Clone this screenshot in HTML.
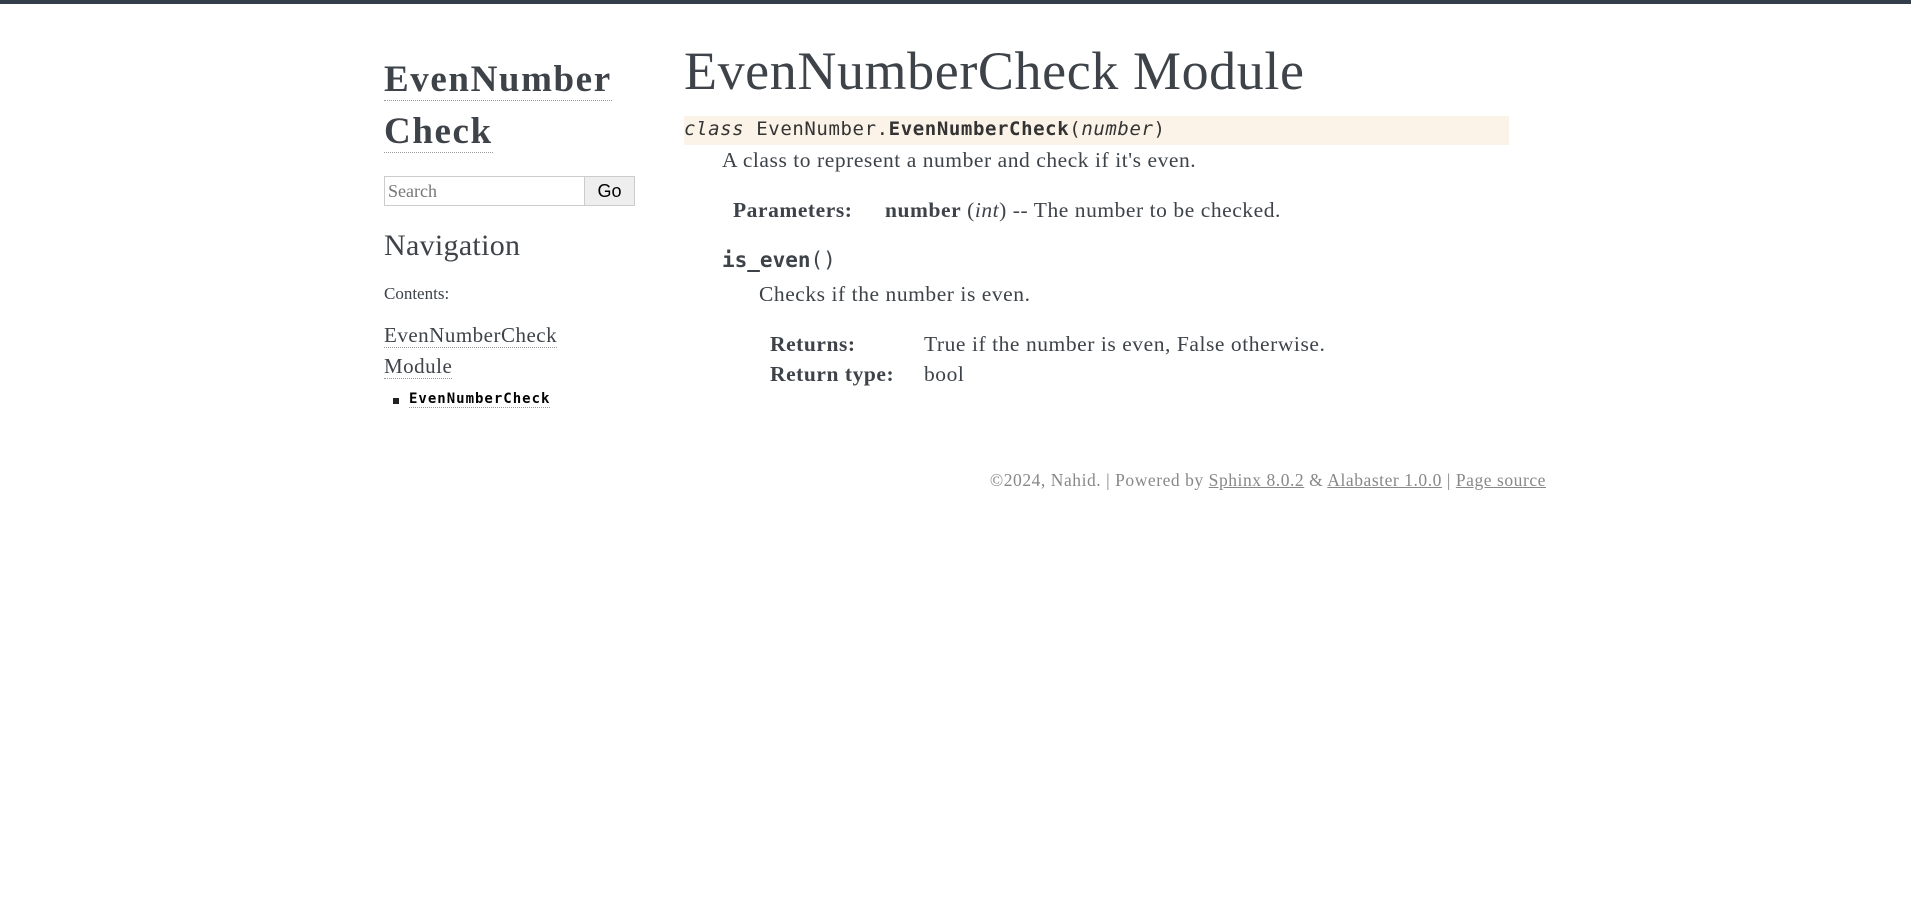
<!DOCTYPE html>
<html><head><meta charset="utf-8"><style>
body{margin:0;width:1911px;height:905px;background:#fff;color:#3e4349;font-family:"Liberation Serif","DejaVu Serif",serif;position:relative;overflow:hidden;border-top:4px solid #343d4a;box-sizing:border-box}
.a{position:absolute;white-space:nowrap}
.mono{font-family:"DejaVu Sans Mono","Liberation Mono",monospace}
.u{border-bottom:1px dotted #999}
.t{font-size:21.5px;line-height:28px;letter-spacing:0.55px}
</style></head><body>
<div class="a" style="left:384px;top:50px;font-size:37px;font-weight:bold;line-height:52px;letter-spacing:1.6px;color:#3e4349">
<span class="u">EvenNumber</span><br><span class="u">Check</span></div>
<div class="a" style="left:384px;top:172px;width:200px;height:28px;border:1px solid #ccc;font-size:18px;line-height:28px;color:#777;padding-left:3px;box-sizing:content-box">Search</div>
<div class="a" style="left:584px;top:172px;width:49px;height:28px;border:1px solid #ccc;background:#eee;font-size:18px;line-height:28px;text-align:center;color:#000;font-family:'Liberation Sans',sans-serif">Go</div>
<div class="a" style="left:384px;top:222px;font-size:30px;line-height:40px;letter-spacing:0.3px">Navigation</div>
<div class="a" style="left:384px;top:280px;font-size:17px">Contents:</div>
<div class="a" style="left:384px;top:316px;font-size:21px;line-height:31px;letter-spacing:0.5px"><span class="u">EvenNumberCheck</span><br><span class="u">Module</span></div>
<div class="a" style="left:393px;top:394px;width:6px;height:6px;background:#222"></div>
<div class="a mono u" style="left:409px;top:387px;font-size:14px;font-weight:bold;color:#000;letter-spacing:1px">EvenNumberCheck</div>

<div class="a" style="left:684px;top:35px;font-size:54px;line-height:64px;letter-spacing:0.6px">EvenNumberCheck Module</div>
<div class="a" style="left:684px;top:112px;width:825px;height:29px;background:#fbf3e8"></div>
<div class="a mono" style="left:684px;top:111px;font-size:19px;line-height:29px;color:#333;letter-spacing:0.6px"><i>class</i> EvenNumber.<b>EvenNumberCheck</b>(<i>number</i>)</div>
<div class="a t" style="left:722px;top:142px">A class to represent a number and check if it's even.</div>
<div class="a t" style="left:733px;top:192px"><b>Parameters:</b></div>
<div class="a t" style="left:885px;top:192px"><b>number</b> (<i>int</i>) -- The number to be checked.</div>
<div class="a mono" style="left:722px;top:242px;font-size:21px;line-height:28px;font-weight:bold">is_even<span style="font-weight:normal">()</span></div>
<div class="a t" style="left:759px;top:276px">Checks if the number is even.</div>
<div class="a t" style="left:770px;top:326px"><b>Returns:</b></div>
<div class="a t" style="left:924px;top:326px">True if the number is even, False otherwise.</div>
<div class="a t" style="left:770px;top:356px"><b>Return type:</b></div>
<div class="a t" style="left:924px;top:356px">bool</div>
<div class="a" style="right:365px;top:464px;font-size:17.5px;line-height:24px;color:#888;letter-spacing:0.55px">©2024, Nahid. | Powered by <u>Sphinx 8.0.2</u> &amp; <u>Alabaster 1.0.0</u> | <u>Page source</u></div>
</body></html>
